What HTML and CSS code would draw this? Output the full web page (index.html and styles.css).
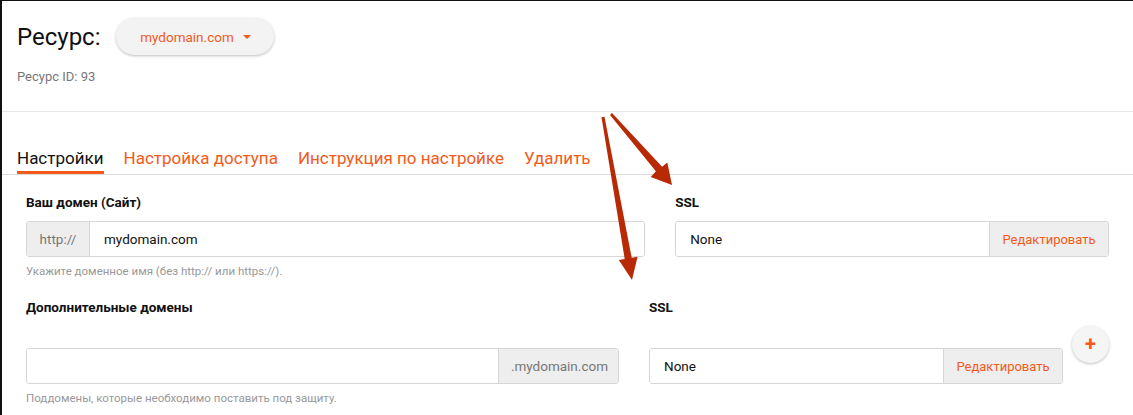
FILE: index.html
```html
<!DOCTYPE html>
<html lang="ru">

<head>
    <meta charset="UTF-8">
    <meta name="viewport" content="width=device-width, initial-scale=1.0">
    <title>Ресурс</title>
    <link rel="stylesheet" href="styles.css">
</head>

<body>
    <div class="page">
        <div class="header">
            <div class="title-row">
                <h1>Ресурс:</h1>
                <div class="resource-select">mydomain.com <span class="caret"></span></div>
            </div>
            <p class="resource-id">Ресурс ID: 93</p>
        </div>

        <div class="tabs">
            <a class="tab active">Настройки</a>
            <a class="tab">Настройка доступа</a>
            <a class="tab">Инструкция по настройке</a>
            <a class="tab">Удалить</a>
        </div>

        <div class="form">
            <div class="row row-main">
                <div class="field">
                    <label class="field-label">Ваш домен (Сайт)</label>
                    <div class="input-group">
                        <span class="addon">http://</span>
                        <input type="text" value="mydomain.com">
                    </div>
                    <p class="help">Укажите доменное имя (без http:// или https://).</p>
                </div>
                <div class="field">
                    <label class="field-label">SSL</label>
                    <div class="input-group">
                        <input type="text" value="None" readonly>
                        <button class="btn-edit">Редактировать</button>
                    </div>
                </div>
            </div>

            <div class="row row-extra">
                <div class="field">
                    <label class="field-label">Дополнительные домены</label>
                    <div class="input-group">
                        <input type="text" value="">
                        <span class="addon">.mydomain.com</span>
                    </div>
                    <p class="help">Поддомены, которые необходимо поставить под защиту.</p>
                </div>
                <div class="field field-ssl">
                    <label class="field-label">SSL</label>
                    <div class="input-group">
                        <input type="text" value="None" readonly>
                        <button class="btn-edit">Редактировать</button>
                    </div>
                </div>
                <button class="btn-add">+</button>
            </div>
        </div>
    </div>

    <svg class="arrows" width="1133" height="415" viewBox="0 0 1133 415">
        <polygon points="610,114.9 655.9,171.2 650.7,176.9 672,185 667.3,162.6 662.1,166.8 612,113.1" />
        <polygon points="601.5,117.3 624.7,258.9 618.8,260 632,280 637.6,256.7 631.7,257.8 604.5,116.7" />
    </svg>
</body>

</html>
```

FILE: styles.css
```css
* {
    margin: 0;
    padding: 0;
    box-sizing: border-box;
    font-family: Roboto, 'Liberation Sans', sans-serif;
}
body {
    background-color: #fff;
    color: #111;
    height: 415px;
    overflow: hidden;
    border-top: 1px solid #111;
    border-left: 2px solid #111;
}
.header {
    height: 111px;
    padding: 17px 15px 0;
    border-bottom: 1px solid #e6e6e6;
}
.title-row {
    display: flex;
    align-items: center;
    height: 37px;
}
.title-row h1 {
    font-size: 24px;
    font-weight: normal;
    color: #111;
}
.resource-select {
    display: flex;
    align-items: center;
    justify-content: center;
    gap: 9px;
    width: 158px;
    height: 37px;
    margin-left: 16px;
    border-radius: 19px;
    background: #f3f3f3;
    box-shadow: 0 1px 3px rgba(0, 0, 0, 0.25);
    color: #f25a1c;
    font-size: 13.5px;
}
.caret {
    width: 0;
    height: 0;
    border-left: 4px solid transparent;
    border-right: 4px solid transparent;
    border-top: 4px solid #f25a1c;
}
.resource-id {
    margin-top: 14px;
    font-size: 13px;
    line-height: 16px;
    color: #777;
}
.tabs {
    display: flex;
    gap: 20px;
    padding: 34px 0 0 15px;
    border-bottom: 1px solid #dcdcdc;
}
.tab {
    font-size: 17px;
    line-height: 24px;
    padding-bottom: 1px;
    border-bottom: 3px solid transparent;
    color: #f25a1c;
    cursor: pointer;
}
.tab.active {
    color: #111;
    border-bottom-color: #f25a1c;
}
.form {
    padding: 0 24px 0 24px;
}
.row {
    display: grid;
}
.row-main {
    grid-template-columns: 588fr 412fr;
    column-gap: 30px;
}
.row-extra {
    grid-template-columns: 593fr 444fr 46px;
}
.field-ssl {
    padding-left: 30px;
}
.field-label {
    display: block;
    margin-top: 19px;
    margin-bottom: 10px;
    font-size: 13.5px;
    line-height: 17px;
    font-weight: bold;
}
.row-extra .field-label {
    margin-top: 20px;
    margin-bottom: 32px;
}
.input-group {
    display: flex;
    height: 36px;
    border: 1px solid #d6d6d6;
    border-radius: 3px;
    overflow: hidden;
}
.input-group input {
    flex: 1;
    min-width: 0;
    border: none;
    outline: none;
    padding: 0 14px;
    font-size: 13.5px;
    color: #111;
    background: #fff;
}
.addon {
    display: flex;
    align-items: center;
    padding: 0 10px;
    background: #eee;
    color: #777;
    font-size: 13.5px;
}
.input-group .addon:first-child {
    width: 63px;
    justify-content: center;
    border-right: 1px solid #d6d6d6;
}
.input-group input + .addon {
    width: 120px;
    justify-content: flex-end;
    border-left: 1px solid #d6d6d6;
}
.btn-edit {
    width: 119px;
    border: none;
    border-left: 1px solid #d6d6d6;
    background: #eee;
    color: #f25a1c;
    font-size: 13px;
    cursor: pointer;
}
.help {
    margin-top: 7px;
    font-size: 11.5px;
    line-height: 15px;
    color: #999;
}
.btn-add {
    justify-self: end;
    align-self: start;
    margin-top: 47px;
    width: 37px;
    height: 37px;
    border: none;
    border-radius: 50%;
    background: #f5f5f5;
    box-shadow: 0 1px 3px rgba(0, 0, 0, 0.25);
    color: #f25a1c;
    font-size: 20px;
    font-weight: bold;
    line-height: 37px;
}
.arrows {
    position: absolute;
    top: 0;
    left: 0;
    pointer-events: none;
}
.arrows polygon {
    fill: #b82a05;
}
```
